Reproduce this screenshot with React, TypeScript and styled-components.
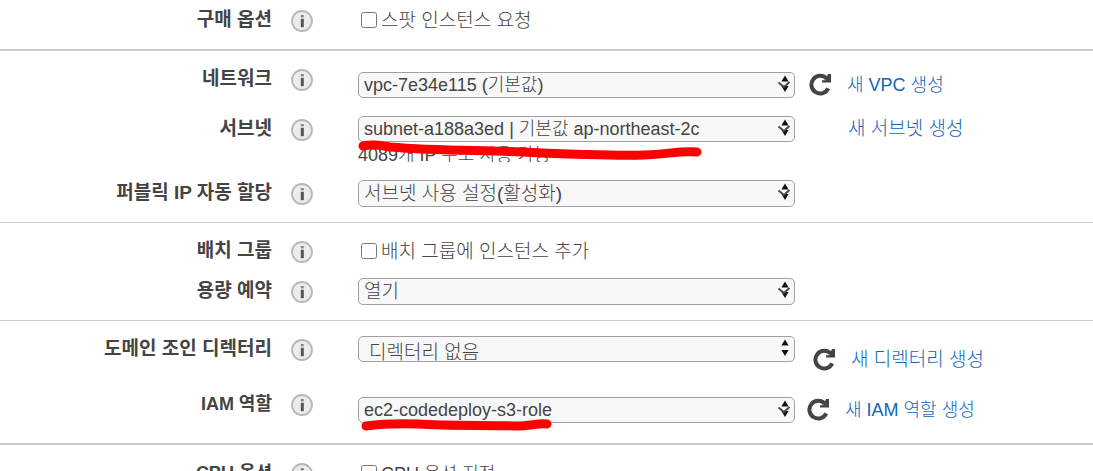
import React, { ReactNode } from "react";
import styled, { createGlobalStyle } from "styled-components";

const GlobalStyle = createGlobalStyle`
  * { box-sizing: border-box; }
  body {
    margin: 0;
    background: #fff;
    color: #444;
    font-family: "Liberation Sans", "Noto Sans CJK KR", sans-serif;
    font-size: 19px;
    line-height: 24px;
    overflow: hidden;
  }
`;

const Form = styled.form`
  display: flex;
  flex-direction: column;
`;

const Section = styled.section<{ $rule?: number; $top?: number }>`
  padding-top: ${(p) => p.$top ?? 14}px;
  border-bottom: ${(p) => p.$rule ?? 1}px solid #ccc;
`;

const Row = styled.div<{ $height?: number }>`
  display: grid;
  grid-template-columns: 272px 41px minmax(0, 482fr) minmax(0, 298fr);
  align-items: start;
  min-height: ${(p) => p.$height ?? 43}px;
`;

const Label = styled.label<{ $latin?: boolean }>`
  padding-top: 2px;
  text-align: right;
  font-weight: 700;
  font-size: ${(p) => (p.$latin ? 18 : 19)}px;
`;

const InfoButton = styled.button`
  width: 22px;
  height: 22px;
  margin: 4px 0 0 19px;
  padding: 0;
  border: 0;
  background: none;
  svg { display: block; }
`;

const Field = styled.div<{ $low?: boolean }>`
  position: relative;
  margin-left: 45px;
  padding-top: ${(p) => (p.$low ? 7 : 1)}px;
`;

const SelectBox = styled.div`
  position: relative;
`;

const Select = styled.select<{ $latin?: boolean; $tall?: boolean; $inset?: boolean }>`
  appearance: none;
  display: block;
  width: 100%;
  height: ${(p) => (p.$tall ? 27 : 26)}px;
  padding: ${(p) => (p.$inset ? "4px 24px 0 10px" : "0 24px 0 5px")};
  border: 1px solid #a0a0a0;
  border-radius: 5px;
  background: #f8f8f8;
  color: #444;
  font-family: inherit;
  font-size: ${(p) => (p.$latin ? 18 : 19)}px;
  font-weight: 300;
  line-height: 24px;
`;

const Arrows = styled.svg`
  position: absolute;
  top: 0;
  right: 4px;
  pointer-events: none;
`;

const Marker = styled.svg`
  position: absolute;
  left: 0;
  top: 100%;
  z-index: 1;
  overflow: visible;
  pointer-events: none;
`;

const Check = styled.label<{ $latin?: boolean }>`
  display: flex;
  align-items: center;
  gap: 4px;
  height: 26px;
  padding-left: 3px;
  font-size: ${(p) => (p.$latin ? 18 : 19)}px;
  font-weight: 300;
  input {
    width: 16px;
    height: 16px;
    margin: 0;
  }
  span { padding-top: 2px; }
`;

const Note = styled.div`
  height: 20px;
  padding-top: 1px;
  overflow: hidden;
  font-size: 18px;
  font-weight: 300;
`;

const Aside = styled.div<{ $top: number; $indent?: number }>`
  display: flex;
  align-items: center;
  gap: 15px;
  padding: ${(p) => p.$top}px 0 0 ${(p) => p.$indent ?? 14}px;
  white-space: nowrap;
`;

const RefreshButton = styled.button`
  width: 23px;
  height: 24px;
  padding: 0;
  border: 0;
  background: none;
  svg { display: block; }
`;

const Link = styled.a<{ $latin?: boolean }>`
  padding-top: 2px;
  color: #1166bb;
  text-decoration: none;
  font-size: ${(p) => (p.$latin ? 18 : 19)}px;
  font-weight: 300;
`;

const Info = ({ about }: { about: string }) => (
  <InfoButton type="button" aria-label={about}>
    <svg width="22" height="22" viewBox="0 0 22 22">
      <circle cx="11" cy="11" r="10" fill="#ececec" stroke="#b8b8b8" strokeWidth="1.8" />
      <path d="M9.8 8.8h3v8.400h-3z" fill="#555" />
      <rect x="9.8" y="5" width="3" height="2.400" fill="#888" />
    </svg>
  </InfoButton>
);

const Refresh = () => (
  <RefreshButton type="button" aria-label="새로 고침">
    <svg width="23" height="24" viewBox="0 0 23 24">
      <path d="M17.500 6.500A8.800 8.800 0 1 0 19.200 16.300" fill="none" stroke="#444" strokeWidth="4" />
      <path d="M22 2v8.500h-9V8.200h3.200l2.800-6.200z" fill="#444" />
    </svg>
  </RefreshButton>
);

type DropdownProps = {
  id: string;
  value: string;
  latin?: boolean;
  tall?: boolean;
  inset?: boolean;
  chevron?: boolean;
  children?: ReactNode;
};

const Dropdown = ({ id, value, latin, tall, inset, chevron = true, children }: DropdownProps) => (
  <SelectBox>
    <Select id={id} $latin={latin} $tall={tall} $inset={inset}>
      <option>{value}</option>
    </Select>
    <Arrows width="14" height="24" viewBox="0 0 14 24">
      <path d="M8 3.500l3.600 6H4.400zM8 20l3.600-6H4.400z" fill="#111" />
      {chevron && <path d="M1.500 10.500l5.500 4.500 5.500-5" fill="none" stroke="#444" strokeWidth="1.8" />}
    </Arrows>
    {children}
  </SelectBox>
);

export default function App() {
  return (
    <Form>
      <GlobalStyle />
      <Section $top={6} $rule={2}>
        <Row>
          <Label htmlFor="spot">구매 옵션</Label>
          <Info about="구매 옵션" />
          <Field>
            <Check>
              <input id="spot" type="checkbox" />
              <span>스팟 인스턴스 요청</span>
            </Check>
          </Field>
        </Row>
      </Section>

      <Section>
        <Row $height={50}>
          <Label htmlFor="network">네트워크</Label>
          <Info about="네트워크" />
          <Field $low>
            <Dropdown id="network" value="vpc-7e34e115 (기본값)" latin />
          </Field>
          <Aside $top={6}>
            <Refresh />
            <Link href="#vpc" $latin>새 VPC 생성</Link>
          </Aside>
        </Row>
        <Row $height={64}>
          <Label htmlFor="subnet">서브넷</Label>
          <Info about="서브넷" />
          <Field>
            <Dropdown id="subnet" value="subnet-a188a3ed | 기본값 ap-northeast-2c" latin>
              <Marker width="345" height="18" viewBox="0 0 345 18">
                <path
                  d="M5 4C14 2 20 3 32 5C80 9 120 8 165 10C210 12 250 14 286 13C312 12 318 9 339 10"
                  fill="none"
                  stroke="#f00"
                  strokeWidth="9"
                  strokeLinecap="round"
                />
              </Marker>
            </Dropdown>
            <Note>4089개 IP 주소 사용 가능</Note>
          </Field>
          <Aside $top={0} $indent={53}>
            <Link href="#subnet-new">새 서브넷 생성</Link>
          </Aside>
        </Row>
        <Row>
          <Label htmlFor="public-ip">퍼블릭 IP 자동 할당</Label>
          <Info about="퍼블릭 IP 자동 할당" />
          <Field>
            <Dropdown id="public-ip" value="서브넷 사용 설정(활성화)" tall />
          </Field>
        </Row>
      </Section>

      <Section>
        <Row $height={40}>
          <Label htmlFor="placement">배치 그룹</Label>
          <Info about="배치 그룹" />
          <Field>
            <Check>
              <input id="placement" type="checkbox" />
              <span>배치 그룹에 인스턴스 추가</span>
            </Check>
          </Field>
        </Row>
        <Row>
          <Label htmlFor="capacity">용량 예약</Label>
          <Info about="용량 예약" />
          <Field>
            <Dropdown id="capacity" value="열기" tall />
          </Field>
        </Row>
      </Section>

      <Section $rule={2}>
        <Row $height={55}>
          <Label htmlFor="directory">도메인 조인 디렉터리</Label>
          <Info about="도메인 조인 디렉터리" />
          <Field>
            <Dropdown id="directory" value="디렉터리 없음" inset chevron={false} />
          </Field>
          <Aside $top={11} $indent={18}>
            <Refresh />
            <Link href="#directory-new">새 디렉터리 생성</Link>
          </Aside>
        </Row>
        <Row $height={53}>
          <Label htmlFor="iam" $latin>IAM 역할</Label>
          <Info about="IAM 역할" />
          <Field $low>
            <Dropdown id="iam" value="ec2-codedeploy-s3-role" latin>
              <Marker width="195" height="10" viewBox="0 0 195 10">
                <path
                  d="M8 3C22 1 35 0 60 1C90 3 130 2 158 3C172 3 180 0 189 1"
                  fill="none"
                  stroke="#f00"
                  strokeWidth="9"
                  strokeLinecap="round"
                />
              </Marker>
            </Dropdown>
          </Field>
          <Aside $top={6} $indent={12}>
            <Refresh />
            <Link href="#iam-new" $latin>새 IAM 역할 생성</Link>
          </Aside>
        </Row>
      </Section>

      <Section>
        <Row>
          <Label htmlFor="cpu" $latin>CPU 옵션</Label>
          <Info about="CPU 옵션" />
          <Field>
            <Check $latin>
              <input id="cpu" type="checkbox" />
              <span>CPU 옵션 지정</span>
            </Check>
          </Field>
        </Row>
      </Section>
    </Form>
  );
}
